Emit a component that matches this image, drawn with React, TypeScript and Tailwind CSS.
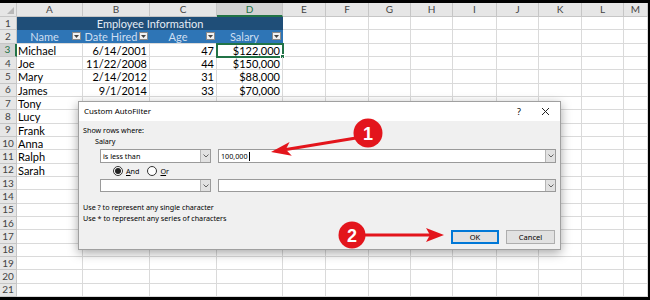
import React from "react";

const COLS = ["A", "B", "C", "D", "E", "F", "G", "H", "I", "J", "K", "L", "M"];
const WIDTHS = [
  "w-[66px]",
  "w-[67px]",
  "w-[67px]",
  "w-[66px]",
  "w-[43px]",
  "w-[43px]",
  "w-[42px]",
  "w-[42px]",
  "w-[44px]",
  "w-[42px]",
  "w-[43px]",
  "w-[42px]",
  "flex-1",
];

const people = [
  ["Michael", "6/14/2001", "47", "$122,000"],
  ["Joe", "11/22/2008", "44", "$150,000"],
  ["Mary", "2/14/2012", "31", "$88,000"],
  ["James", "9/1/2014", "33", "$70,000"],
  ["Tony", "", "", ""],
  ["Lucy", "", "", ""],
  ["Frank", "", "", ""],
  ["Anna", "", "", ""],
  ["Ralph", "", "", ""],
  ["Sarah", "", "", ""],
];

const grid = "border-r border-b border-[#dadada]";

function FilterBtn() {
  return (
    <span className="w-[9px] h-[8px] bg-[#f2f2f2] border border-[#8a8a8a] flex items-center justify-center shrink-0">
      <svg width="5" height="3" viewBox="0 0 5 3">
        <polygon points="0,0 5,0 2.5,3" fill="#444" />
      </svg>
    </span>
  );
}

function RowHeader({ n }: { n: number }) {
  const sel = n === 3;
  return (
    <div
      className={`w-[17px] shrink-0 flex items-center justify-center text-[10px] ${
        sel
          ? "bg-[#d2d2d2] text-[#217346] border-r-2 border-r-[#217346] border-b border-b-[#c6c6c6]"
          : "bg-[#e6e6e6] text-[#444] border-r border-b border-[#c6c6c6]"
      }`}
    >
      {n}
    </div>
  );
}

function Blank({ from }: { from: number }) {
  return (
    <>
      {WIDTHS.slice(from).map((w, i) => (
        <div key={i} className={`${w} shrink-0 ${grid}`} />
      ))}
    </>
  );
}

function SheetRow({ n }: { n: number }) {
  if (n === 1) {
    return (
      <div className="flex h-[13.333px]">
        <RowHeader n={n} />
        <div className="w-[266px] shrink-0 bg-[#1f4e78] text-[#e4ecf5] text-[11px] leading-[13px] flex items-center justify-center">
          Employee Information
        </div>
        <Blank from={4} />
      </div>
    );
  }
  if (n === 2) {
    const heads = ["Name", "Date Hired", "Age", "Salary"];
    return (
      <div className="flex h-[13.333px]">
        <RowHeader n={n} />
        {heads.map((h, i) => (
          <div
            key={h}
            className={`${WIDTHS[i]} shrink-0 bg-[#2e75b6] text-[#cddff2] text-[11px] leading-[13px] flex items-center pr-[2px] border-b border-[#dadada]`}
          >
            <span className="flex-1 text-center">{h}</span>
            <FilterBtn />
          </div>
        ))}
        <Blank from={4} />
      </div>
    );
  }
  const p = people[n - 3];
  if (p) {
    return (
      <div className="flex h-[13.333px] text-[11px] leading-[13px] text-black">
        <RowHeader n={n} />
        <div className={`${WIDTHS[0]} shrink-0 ${grid} pl-[1px]`}>{p[0]}</div>
        <div className={`${WIDTHS[1]} shrink-0 ${grid} pr-[2px] text-right`}>{p[1]}</div>
        <div className={`${WIDTHS[2]} shrink-0 ${grid} pr-[2px] text-right`}>{p[2]}</div>
        <div
          className={`${WIDTHS[3]} shrink-0 ${grid} pr-[2px] text-right relative ${
            n === 3 ? "outline-2 outline-[#217346] -outline-offset-1" : ""
          }`}
        >
          {p[3]}
          {n === 3 && (
            <span className="absolute -right-[3px] -bottom-[3px] w-[5px] h-[5px] bg-[#217346] border border-white" />
          )}
        </div>
        <Blank from={4} />
      </div>
    );
  }
  return (
    <div className="flex h-[13.333px]">
      <RowHeader n={n} />
      <Blank from={0} />
    </div>
  );
}

function Chevron() {
  return (
    <span className="w-[10px] self-stretch bg-[#e1e1e1] border-l border-[#b5b5b5] flex items-center justify-center">
      <svg width="6" height="4" viewBox="0 0 6 4">
        <polyline points="0.5,0.5 3,3 5.5,0.5" fill="none" stroke="#555" strokeWidth="0.9" />
      </svg>
    </span>
  );
}

function Radio({ on, label }: { on: boolean; label: string }) {
  return (
    <span className="flex items-center gap-[3px]">
      <span className="w-[10px] h-[10px] rounded-full border border-[#333] bg-white flex items-center justify-center">
        {on && <span className="w-[6px] h-[6px] rounded-full bg-[#222]" />}
      </span>
      <span>
        <span className="underline">{label[0]}</span>
        {label.slice(1)}
      </span>
    </span>
  );
}

function Dialog() {
  return (
    <div
      className="absolute left-[78px] top-[98px] w-[483px] h-[149px] bg-[#f0f0f0] border border-[#a0a0a0] shadow-[0_3px_10px_rgba(0,0,0,0.35)] flex flex-col text-[7.2px] text-black"
      style={{ fontFamily: '"Noto Sans", "Open Sans", sans-serif' }}
    >
      <div className="h-[19px] bg-white flex items-center pl-[5px] pr-[10px] text-[7.9px]">
        <span className="flex-1">Custom AutoFilter</span>
        <span className="text-[9px] mr-[20px]">?</span>
        <svg width="9" height="9" viewBox="0 0 9 9">
          <path d="M1 1 L8 8 M8 1 L1 8" stroke="#222" strokeWidth="1" />
        </svg>
      </div>
      <div className="flex flex-col pl-[4px] pt-[4px] leading-[11px]">
        <span>Show rows where:</span>
        <span className="pl-[12px]">Salary</span>
        <div className="flex mt-[2px] pl-[17px] gap-[7px] h-[14px]">
          <div className="w-[111px] bg-white border border-[#9a9a9a] flex items-center">
            <span className="flex-1 pl-[2px]">is less than</span>
            <Chevron />
          </div>
          <div className="w-[338px] bg-white border border-[#9a9a9a] flex items-center">
            <span className="flex-1 pl-[2px] flex items-center">
              100,000
              <span className="w-px h-[9px] bg-black ml-px" />
            </span>
            <Chevron />
          </div>
        </div>
        <div className="flex mt-[2px] pl-[30px] gap-[8px] h-[12px] items-center">
          <Radio on label="And" />
          <Radio on={false} label="Or" />
        </div>
        <div className="flex mt-[2px] pl-[17px] gap-[7px] h-[13px]">
          <div className="w-[111px] bg-white border border-[#9a9a9a] flex items-center">
            <span className="flex-1" />
            <Chevron />
          </div>
          <div className="w-[338px] bg-white border border-[#9a9a9a] flex items-center">
            <span className="flex-1" />
            <Chevron />
          </div>
        </div>
        <span className="mt-[10px]">Use ? to represent any single character</span>
        <span>Use * to represent any series of characters</span>
        <div className="flex justify-end gap-[7px] mt-[6px] pr-[5px]">
          <button className="w-[48px] h-[14px] bg-[#e1e1e1] border-2 border-[#0078d7] text-[7.5px] leading-[10px]">
            OK
          </button>
          <button className="w-[49px] h-[14px] bg-[#e1e1e1] border border-[#adadad] text-[7.5px] leading-[10px]">
            Cancel
          </button>
        </div>
      </div>
    </div>
  );
}

function Annotations() {
  const red = "#e3151c";
  return (
    <svg
      className="absolute left-0 top-0 pointer-events-none"
      width="650"
      height="300"
      viewBox="0 0 650 300"
    >
      <line x1="356" y1="138" x2="286" y2="149.5" stroke={red} strokeWidth="3" />
      <polygon points="271,152 289.6,141.9 285.8,149.6 291.8,155.7" fill={red} />
      <circle cx="368" cy="133" r="14.5" fill={red} />
      <text
        x="368"
        y="139.5"
        textAnchor="middle"
        fontSize="18"
        fontWeight="bold"
        fill="white"
        fontFamily="Liberation Sans, sans-serif"
      >
        1
      </text>
      <line x1="364" y1="235" x2="432" y2="235" stroke={red} strokeWidth="3" />
      <polygon points="444,235 426,228 430,235 426,242" fill={red} />
      <circle cx="352" cy="235" r="13.5" fill={red} />
      <text
        x="352"
        y="241.5"
        textAnchor="middle"
        fontSize="18"
        fontWeight="bold"
        fill="white"
        fontFamily="Liberation Sans, sans-serif"
      >
        2
      </text>
    </svg>
  );
}

export default function App() {
  return (
    <div className="relative w-[650px] h-[300px] bg-black pt-[3px] pr-[2px] pb-[3px] overflow-hidden">
      <div
        className="relative w-[648px] h-[294px] bg-white overflow-hidden"
        style={{ fontFamily: "Lato, Carlito, sans-serif" }}
      >
        <div className="flex h-[14px] text-[10px]">
          <div className="w-[17px] shrink-0 bg-[#e6e6e6] border-r border-b border-[#c6c6c6] relative">
            <svg className="absolute right-[2px] bottom-[2px]" width="7" height="7" viewBox="0 0 7 7">
              <polygon points="7,0 7,7 0,7" fill="#b8b8b8" />
            </svg>
          </div>
          {COLS.map((c, i) => (
            <div
              key={c}
              className={`${WIDTHS[i]} shrink-0 flex items-center justify-center ${
                c === "D"
                  ? "bg-[#d2d2d2] text-[#217346] border-b-2 border-b-[#217346] border-r border-r-[#c6c6c6]"
                  : "bg-[#e6e6e6] text-[#444] border-r border-b border-[#c6c6c6]"
              }`}
            >
              {c}
            </div>
          ))}
        </div>
        {Array.from({ length: 21 }, (_, i) => (
          <SheetRow key={i} n={i + 1} />
        ))}
        <Dialog />
      </div>
      <Annotations />
    </div>
  );
}
